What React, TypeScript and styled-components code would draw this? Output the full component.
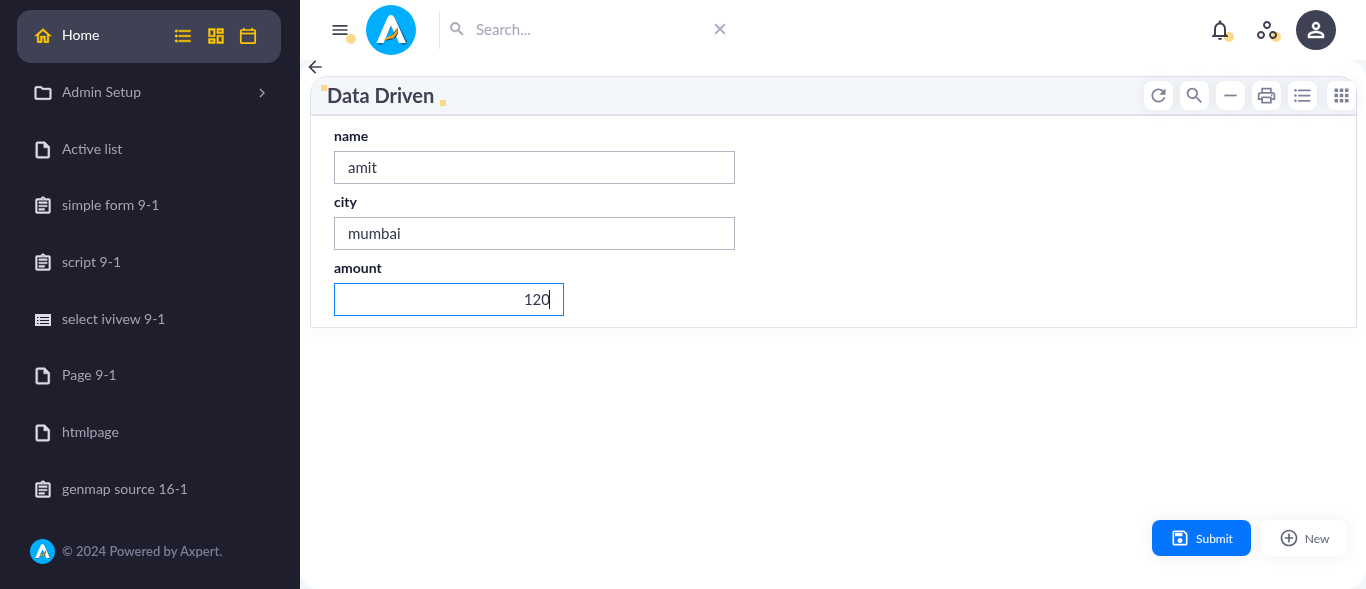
import React from 'react';
import styled, { createGlobalStyle, css } from 'styled-components';
import {
  MdApps,
  MdArrowBack,
  MdClose,
  MdFormatListBulleted,
  MdMenu,
  MdNotificationsNone,
  MdOutlineAddCircleOutline,
  MdOutlineAssignment,
  MdOutlineDashboard,
  MdOutlineFolder,
  MdOutlineHome,
  MdOutlinePrint,
  MdOutlineSave,
  MdOutlineWorkspaces,
  MdPersonOutline,
  MdRefresh,
  MdRemove,
  MdSearch,
} from 'react-icons/md';

const GlobalStyle = createGlobalStyle`
  *, *::before, *::after { box-sizing: border-box; }
  body {
    margin: 0;
    background: #f3f7fa;
    color: #181c32;
    font-family: Lato, "Noto Sans", sans-serif;
    font-size: 14px;
  }
  button, input { font-family: inherit; }
  button { cursor: pointer; }
  svg { display: block; flex: none; }
`;

/* Thickens the filled outlines of the icon set. */
const boldIcon = css`
  svg path:not([fill="none"]) {
    stroke: currentColor;
    stroke-width: 0.5px;
  }
`;

const Shell = styled.div`
  display: flex;
  min-height: 100vh;
`;

/* Sidebar */

const Sidebar = styled.aside`
  display: flex;
  flex-direction: column;
  flex: none;
  width: 300px;
  height: 100vh;
  padding: 10px 19px 25px 17px;
  background: #1f1e2c;
`;

const Menu = styled.nav`
  display: flex;
  flex: 1;
  flex-direction: column;
  justify-content: space-between;
`;

const MenuRow = styled.div<{ $active?: boolean }>`
  display: flex;
  align-items: center;
  gap: 12px;
  height: 53px;
  padding: 0 14px 0 16px;
  border-radius: 14px;
  ${boldIcon}
  ${({ $active }) => $active && css`
    padding-right: 24px;
    padding-bottom: 1px;
    background: #3f4254;
  `}
`;

const MenuLink = styled.a<{ $active?: boolean }>`
  display: flex;
  flex: 1;
  align-items: center;
  gap: 10px;
  color: ${({ $active }) => ($active ? '#ffffff' : '#a3a3b4')};
  font-size: 14px;
  line-height: 20px;
  text-decoration: none;
`;

const IconSlot = styled.span<{ $active?: boolean }>`
  display: grid;
  place-items: center;
  width: 19px;
  height: 20px;
  color: ${({ $active }) => ($active ? '#ffc700' : '#dcdce8')};
`;

const MenuLabel = styled.span`
  padding-bottom: 2px;
`;

const Shortcuts = styled.div`
  display: flex;
  align-items: center;
  gap: 13px;
`;

const ShortcutButton = styled.button`
  padding: 0;
  border: 0;
  background: none;
  color: #ffc700;
`;

const ChevronSlot = styled.span`
  margin-left: auto;
`;

const Copyright = styled.footer`
  display: flex;
  align-items: center;
  gap: 7px;
  margin-top: 23px;
  padding-left: 13px;
  color: #7e7e96;
  font-size: 13px;
  font-weight: 600;
  line-height: 20px;
`;

/* Main column */

const Main = styled.div`
  display: flex;
  flex: 1;
  flex-direction: column;
  min-width: 0;
`;

const TopBar = styled.header`
  display: flex;
  align-items: center;
  height: 60px;
  padding: 0 30px;
  background: #ffffff;
`;

const IconButton = styled.button`
  position: relative;
  display: flex;
  padding: 0;
  border: 0;
  background: none;
  color: #3f4254;
`;

const Dot = styled.span<{ $outer?: boolean }>`
  position: absolute;
  right: ${({ $outer }) => ($outer ? '-6px' : '-2px')};
  bottom: ${({ $outer }) => ($outer ? '-4px' : '0')};
  width: 10px;
  height: 10px;
  border-radius: 50%;
  background: #fcd98a;
  mix-blend-mode: multiply;
`;

const Brand = styled.a`
  margin: 0 23px 0 16px;
`;

const SearchBox = styled.div`
  display: flex;
  align-items: center;
  gap: 10px;
  width: 290px;
  height: 38px;
  padding: 0 0 2px 8px;
  border-left: 1px solid #e4e6ef;
  color: #a1a5b7;
  ${boldIcon}
`;

const SearchInput = styled.input`
  flex: 1;
  min-width: 0;
  padding: 0;
  border: 0;
  outline: 0;
  background: none;
  color: #3f4254;
  font-size: 15px;
  line-height: 20px;

  &::placeholder { color: #a1a5b7; opacity: 1; }
`;

const ClearButton = styled(IconButton)`
  color: #a1a5b7;
`;

const Actions = styled.div`
  display: flex;
  align-items: center;
  gap: 23px;
  margin-left: auto;
`;

const Avatar = styled.button`
  display: grid;
  place-items: center;
  width: 40px;
  height: 40px;
  margin-left: -6px;
  padding: 0;
  border: 0;
  border-radius: 50%;
  background: #3f4254;
  color: #ffffff;
  ${boldIcon}
`;

const Page = styled.main`
  display: flex;
  flex: 1;
  flex-direction: column;
  padding: 0 9px 33px 10px;
  border-radius: 20px;
  background: #ffffff;
`;

const BackRow = styled.div`
  display: flex;
  align-items: center;
  height: 16px;
  margin-left: -5px;
  padding-bottom: 2px;
`;

const Panel = styled.section`
  border: 1px solid #e1e1ec;
  border-radius: 18px 18px 0 0;
  box-shadow: 0 8px 16px rgba(63, 66, 84, 0.02);
`;

const PanelHeader = styled.div`
  display: flex;
  align-items: center;
  justify-content: space-between;
  height: 39px;
  padding-left: 16px;
  border-bottom: 2px solid #e1e1ec;
  border-radius: 18px 18px 0 0;
  background: #f3f7fa;
`;

const Title = styled.h1`
  position: relative;
  margin: 0;
  padding-bottom: 2px;
  color: #3f4254;
  font-size: 20px;
  font-weight: 700;
  line-height: 24px;

  &::before, &::after {
    content: "";
    position: absolute;
    width: 6px;
    height: 6px;
    background: #fcd98a;
  }
  &::before { top: 2px; left: -6px; }
  &::after { right: -12px; bottom: 3px; }
`;

const Tools = styled.div`
  display: flex;
  gap: 7px;
`;

const ToolButton = styled.button<{ $apart?: boolean }>`
  display: grid;
  place-items: center;
  width: 29px;
  height: 29px;
  margin-left: ${({ $apart }) => ($apart ? '3px' : '0')};
  padding: 0;
  border: 0;
  border-radius: 8px;
  background: #ffffff;
  box-shadow: 0 0 14px rgba(63, 66, 84, 0.08);
  color: #7e8299;
`;

const Form = styled.form`
  padding: 10px 23px 11px;
`;

const Field = styled.div`
  display: flex;
  flex-direction: column;
  margin-bottom: 8px;

  &:last-child { margin-bottom: 0; }
`;

const FieldLabel = styled.label`
  margin-bottom: 5px;
  font-size: 14px;
  font-weight: 700;
  line-height: 20px;
`;

const FieldBox = styled.div<{ $numeric?: boolean }>`
  position: relative;
  width: ${({ $numeric }) => ($numeric ? '230px' : '401px')};
  max-width: 100%;
`;

const FieldInput = styled.input<{ $numeric?: boolean }>`
  display: block;
  width: 100%;
  height: 33px;
  padding: 0 13px 2px;
  border: 1px solid #b5b5c3;
  border-radius: 0;
  outline: 0;
  background: #ffffff;
  caret-color: transparent;
  color: #33374a;
  font-size: 15px;
  text-align: ${({ $numeric }) => ($numeric ? 'right' : 'left')};

  &:focus { border-color: #0f7bff; }
  &:focus + span { visibility: visible; }
`;

const Caret = styled.span`
  position: absolute;
  top: 7px;
  right: 14px;
  width: 1px;
  height: 19px;
  visibility: hidden;
  background: #181c32;
`;

const FormActions = styled.div`
  display: flex;
  justify-content: flex-end;
  gap: 10px;
  margin-top: auto;
  padding-right: 10px;
`;

const ActionButton = styled.button<{ $primary?: boolean }>`
  display: flex;
  align-items: center;
  justify-content: center;
  gap: 6px;
  width: ${({ $primary }) => ($primary ? '99px' : '86px')};
  height: 36px;
  padding: 0;
  border: 0;
  border-radius: 8px;
  background: ${({ $primary }) => ($primary ? '#0575ff' : '#ffffff')};
  box-shadow: 0 0 16px rgba(63, 66, 84, 0.08);
  color: ${({ $primary }) => ($primary ? '#ffffff' : '#5e6278')};
  font-size: 12px;
`;

const Logo = ({ size }: { size: number }) => (
  <svg width={size} height={size} viewBox="0 0 50 50" aria-hidden="true">
    <circle cx="25" cy="25" r="25" fill="#00aeff" />
    <path d="M14.5 37 26 14 38 37" fill="none" stroke="#14506e" strokeOpacity=".7" strokeWidth="6" strokeLinecap="round" strokeLinejoin="round" />
    <path d="M10.5 38 21.5 12.5Q25 7 28.5 12.5L40 38H33L25 20.5 17.500 38Z" fill="#ffffff" />
    <path d="M19.5 35.5Q24 31 27 28.5L31.5 22.500Q33 29 30 32 26 35.500 19.500 35.500Z" fill="#38484f" />
    <path d="M18 34.5Q22 31 25.5 30.5 29 28.5 31.5 22.5 32.5 28 28.5 31.5 28 34 24.5 33.5 21 35 18 34.5Z" fill="#f5a51c" />
  </svg>
);

const ListViewIcon = () => (
  <svg width="18" height="18" viewBox="0 0 18 18" aria-hidden="true">
    <rect x="1" y="3" width="16" height="12" fill="#dcdce8" />
    <path fill="none" stroke="#1f1e2c" d="M6 6.5h9M6 9.5h9M6 12.5h9M3 6.5h1.500M3 9.5h1.500M3 12.5h1.500" />
  </svg>
);

const PageIcon = () => (
  <svg width="16" height="18" viewBox="0 0 16 18" aria-hidden="true">
    <path
      fill="currentColor"
      fillRule="evenodd"
      d="M2.5.8H9.800L14.700 5.700V15.500Q14.700 17.200 13 17.200H2.500Q.8 17.200.8 15.500V2.500Q.8.8 2.500.8ZM2.600 2.600V15.400H12.900V6.800H8.800V2.600Z"
    />
  </svg>
);

const CalendarIcon = () => (
  <svg width="18" height="18" viewBox="0 0 18 18" aria-hidden="true">
    <g fill="none" stroke="currentColor" strokeWidth="1.7">
      <rect x="1.8" y="3" width="14.4" height="13.2" rx="1" />
      <line x1="2" x2="16" y1="6.5" y2="6.5" />
      <line x1="5" x2="5" y1="1" y2="3.5" />
      <line x1="13" x2="13" y1="1" y2="3.5" />
    </g>
  </svg>
);

const ChevronIcon = () => (
  <svg width="9" height="12" viewBox="0 0 9 12" aria-hidden="true">
    <polyline points="2,2 6,6 2,10" fill="none" stroke="currentColor" strokeWidth="1.3" />
  </svg>
);

const menuItems = [
  { label: 'Admin Setup', icon: <MdOutlineFolder size={20} />, expandable: true },
  { label: 'Active list', icon: <PageIcon /> },
  { label: 'simple form 9-1', icon: <MdOutlineAssignment size={20} /> },
  { label: 'script 9-1', icon: <MdOutlineAssignment size={20} /> },
  { label: 'select ivivew 9-1', icon: <ListViewIcon /> },
  { label: 'Page 9-1', icon: <PageIcon /> },
  { label: 'htmlpage', icon: <PageIcon /> },
  { label: 'genmap source 16-1', icon: <MdOutlineAssignment size={20} /> },
];

export default function App() {
  return (
    <>
      <GlobalStyle />
      <Shell>
        <Sidebar>
          <Menu>
            <MenuRow $active>
              <MenuLink href="#home" $active>
                <IconSlot $active><MdOutlineHome size={20} /></IconSlot>
                <MenuLabel>Home</MenuLabel>
              </MenuLink>
              <Shortcuts>
                <ShortcutButton aria-label="List"><MdFormatListBulleted size={20} /></ShortcutButton>
                <ShortcutButton aria-label="Dashboard"><MdOutlineDashboard size={20} /></ShortcutButton>
                <ShortcutButton aria-label="Calendar"><CalendarIcon /></ShortcutButton>
              </Shortcuts>
            </MenuRow>
            {menuItems.map(({ label, icon, expandable }) => (
              <MenuRow key={label}>
                <MenuLink href="#">
                  <IconSlot>{icon}</IconSlot>
                  <MenuLabel>{label}</MenuLabel>
                  {expandable && <ChevronSlot><ChevronIcon /></ChevronSlot>}
                </MenuLink>
              </MenuRow>
            ))}
          </Menu>
          <Copyright>
            <Logo size={25} />
            <MenuLabel>© 2024 Powered by Axpert.</MenuLabel>
          </Copyright>
        </Sidebar>

        <Main>
          <TopBar>
            <IconButton aria-label="Toggle menu"><MdMenu size={20} /><Dot $outer /></IconButton>
            <Brand href="#" aria-label="Axpert"><Logo size={50} /></Brand>
            <SearchBox>
              <MdSearch size={18} />
              <SearchInput type="text" placeholder="Search..." aria-label="Search" />
              <ClearButton aria-label="Clear search"><MdClose size={18} /></ClearButton>
            </SearchBox>
            <Actions>
              <IconButton aria-label="Notifications"><MdNotificationsNone size={24} /><Dot /></IconButton>
              <IconButton aria-label="Workspaces"><MdOutlineWorkspaces size={24} /><Dot /></IconButton>
              <Avatar aria-label="Profile"><MdPersonOutline size={24} /></Avatar>
            </Actions>
          </TopBar>

          <Page>
            <BackRow>
              <IconButton aria-label="Back"><MdArrowBack size={20} /></IconButton>
            </BackRow>
            <Panel>
              <PanelHeader>
                <Title>Data Driven</Title>
                <Tools>
                  <ToolButton aria-label="Refresh"><MdRefresh size={21} /></ToolButton>
                  <ToolButton aria-label="Search"><MdSearch size={21} /></ToolButton>
                  <ToolButton aria-label="Collapse"><MdRemove size={21} /></ToolButton>
                  <ToolButton aria-label="Print"><MdOutlinePrint size={21} /></ToolButton>
                  <ToolButton aria-label="List"><MdFormatListBulleted size={21} /></ToolButton>
                  <ToolButton aria-label="Apps" $apart><MdApps size={21} /></ToolButton>
                </Tools>
              </PanelHeader>
              <Form id="entry" onSubmit={(event) => event.preventDefault()}>
                <Field>
                  <FieldLabel htmlFor="name">name</FieldLabel>
                  <FieldBox><FieldInput id="name" defaultValue="amit" /></FieldBox>
                </Field>
                <Field>
                  <FieldLabel htmlFor="city">city</FieldLabel>
                  <FieldBox><FieldInput id="city" defaultValue="mumbai" /></FieldBox>
                </Field>
                <Field>
                  <FieldLabel htmlFor="amount">amount</FieldLabel>
                  <FieldBox $numeric>
                    <FieldInput id="amount" defaultValue="120" inputMode="decimal" $numeric autoFocus />
                    <Caret />
                  </FieldBox>
                </Field>
              </Form>
            </Panel>
            <FormActions>
              <ActionButton type="submit" form="entry" $primary><MdOutlineSave size={20} />Submit</ActionButton>
              <ActionButton type="button"><MdOutlineAddCircleOutline size={20} />New</ActionButton>
            </FormActions>
          </Page>
        </Main>
      </Shell>
    </>
  );
}
